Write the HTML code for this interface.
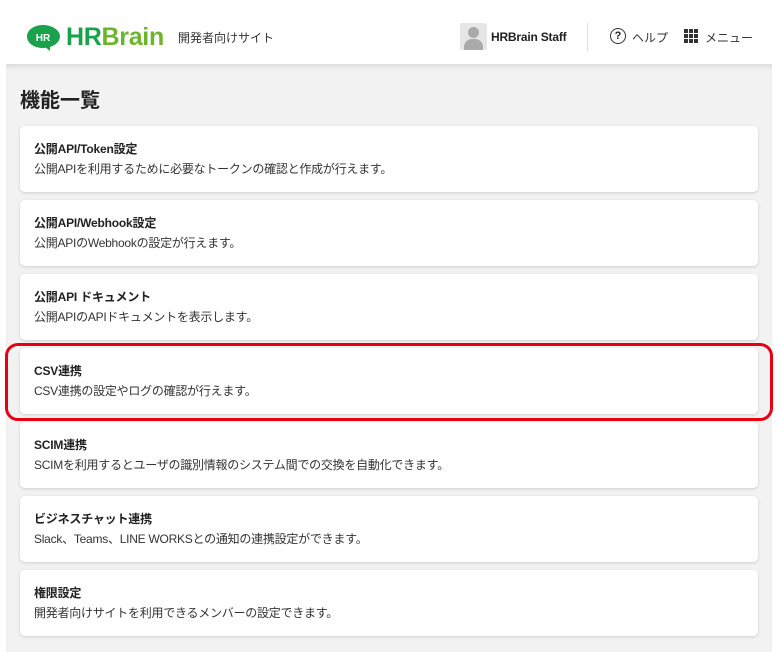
<!DOCTYPE html>
<html><head><meta charset="utf-8"><style>
*{margin:0;padding:0;box-sizing:border-box}
body{width:780px;height:652px;background:#fff;font-family:"Liberation Sans","Noto Sans CJK JP",sans-serif;color:#222;position:relative;overflow:hidden}
.hdr{position:absolute;left:0;top:0;width:780px;height:64px;background:#fff}
.main{position:absolute;left:6px;top:64px;width:766px;height:588px;background:#f2f2f2;box-shadow:inset 0 6px 6px -4px rgba(0,0,0,.12)}
h1{position:absolute;left:20px;top:84px;font-size:20px;font-weight:bold;color:#222}
.card{position:absolute;left:20px;width:738px;height:66px;background:#fff;border-radius:5px;box-shadow:0 1px 3px rgba(0,0,0,.15);padding:15px 14px}
.card b{display:block;font-size:12px;line-height:16px;margin-bottom:4px;letter-spacing:-0.2px}
.card span{display:block;font-size:12px;line-height:16px;color:#333;letter-spacing:-0.25px}
.red{position:absolute;left:5px;top:343px;width:768px;height:78px;border:3px solid #e60012;border-radius:13px}
</style></head><body>
<div class="hdr">
 <svg style="position:absolute;left:26px;top:24px" width="36" height="28" viewBox="0 0 36 28"><path d="M17 1C8 1 1 6 1 12.5S8 24 17 24c1 0 2 0 3-.2l4 3.2v-4C30 21 34 17 34 12.5 34 6 26 1 17 1z" fill="#1aa14b"/><text x="17" y="17" font-size="10" font-weight="bold" fill="#fff" text-anchor="middle" font-family="Liberation Sans">HR</text></svg>
 <div style="position:absolute;left:66px;top:23px;font-size:25px;font-weight:bold;letter-spacing:-0.3px;line-height:28px"><span style="color:#1aa14b">HR</span><span style="color:#6cb52d">Brain</span></div>
 <div style="position:absolute;left:178px;top:29px;font-size:12px;color:#333">開発者向けサイト</div>
 <div style="position:absolute;left:460px;top:23px;width:27px;height:27px;background:#e6e6e6;border-radius:2px;overflow:hidden"><div style="position:absolute;left:8px;top:4px;width:11px;height:11px;border-radius:50%;background:#aaa"></div><div style="position:absolute;left:4px;top:16px;width:19px;height:14px;border-radius:8px 8px 0 0;background:#aaa"></div></div>
 <div style="position:absolute;left:491px;top:30px;font-size:12px;font-weight:bold;letter-spacing:-0.2px">HRBrain Staff</div>
 <div style="position:absolute;left:587px;top:23px;width:1px;height:28px;background:#ddd"></div>
 <div style="position:absolute;left:610px;top:28px;width:16px;height:16px;border:1.3px solid #333;border-radius:50%;font-size:11px;text-align:center;line-height:14px;font-weight:bold">?</div>
 <div style="position:absolute;left:632px;top:29px;font-size:12px;color:#333">ヘルプ</div>
 <svg style="position:absolute;left:684px;top:29px" width="14" height="14"><g fill="#333"><rect x="0" y="0" width="4" height="4"/><rect x="5" y="0" width="4" height="4"/><rect x="10" y="0" width="4" height="4"/><rect x="0" y="5" width="4" height="4"/><rect x="5" y="5" width="4" height="4"/><rect x="10" y="5" width="4" height="4"/><rect x="0" y="10" width="4" height="4"/><rect x="5" y="10" width="4" height="4"/><rect x="10" y="10" width="4" height="4"/></g></svg>
 <div style="position:absolute;left:705px;top:29px;font-size:12px;color:#333">メニュー</div>
</div>
<div class="main"></div>
<h1>機能一覧</h1>
<div class="card" style="top:126px"><b>公開API/Token設定</b><span>公開APIを利用するために必要なトークンの確認と作成が行えます。</span></div>
<div class="card" style="top:200px"><b>公開API/Webhook設定</b><span>公開APIのWebhookの設定が行えます。</span></div>
<div class="card" style="top:274px"><b>公開API ドキュメント</b><span>公開APIのAPIドキュメントを表示します。</span></div>
<div class="card" style="top:348px"><b>CSV連携</b><span>CSV連携の設定やログの確認が行えます。</span></div>
<div class="card" style="top:422px"><b>SCIM連携</b><span>SCIMを利用するとユーザの識別情報のシステム間での交換を自動化できます。</span></div>
<div class="card" style="top:496px"><b>ビジネスチャット連携</b><span>Slack、Teams、LINE WORKSとの通知の連携設定ができます。</span></div>
<div class="card" style="top:570px"><b>権限設定</b><span>開発者向けサイトを利用できるメンバーの設定できます。</span></div>
<div class="red"></div>
</body></html>
